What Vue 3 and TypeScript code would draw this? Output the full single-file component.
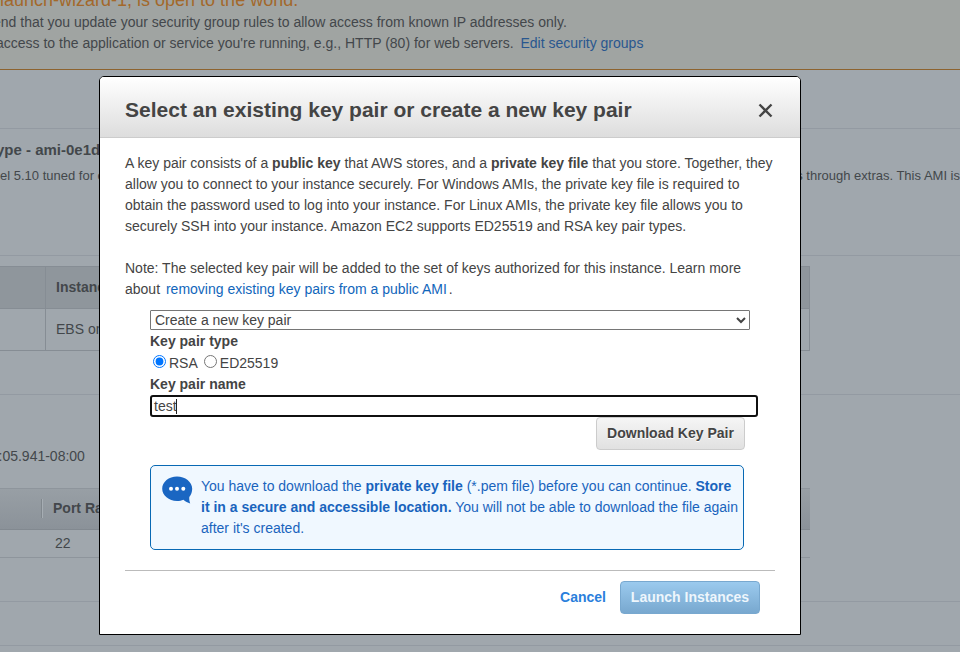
<script setup lang="ts">
import { ref } from 'vue'

const keyOption = ref('create')
const keyType = ref('rsa')
const keyName = ref('test')
const intro: { text: string; bold?: boolean }[][] = [
  [
    { text: 'A key pair consists of a ' },
    { text: 'public key', bold: true },
    { text: ' that AWS stores, and a ' },
    { text: 'private key file', bold: true },
    { text: ' that you store. Together, they' },
  ],
  [{ text: 'allow you to connect to your instance securely. For Windows AMIs, the private key file is required to' }],
  [{ text: 'obtain the password used to log into your instance. For Linux AMIs, the private key file allows you to' }],
  [{ text: 'securely SSH into your instance. Amazon EC2 supports ED25519 and RSA key pair types.' }],
]
</script>

<template>
  <div class="screen">
    <div class="page">
      <header class="alert">
        <h2>launch-wizard-1, is open to the world.</h2>
        <p class="recommend">end that you update your security group rules to allow access from known IP addresses only.</p>
        <p class="access">access to the application or service you're running, e.g., HTTP (80) for web servers. <a>Edit security groups</a></p>
      </header>
      <section class="band spacer"></section>
      <section class="band ami">
        <h3>ype - ami-0e1d</h3>
        <div class="ami-row">
          <span>el 5.10 tuned for optimal</span>
          <span>s through extras. This AMI is</span>
        </div>
      </section>
      <section class="band instance">
        <div class="grid">
          <div class="cell head"></div>
          <div class="cell head"><b>Instance</b></div>
          <div class="cell"></div>
          <div class="cell">EBS only</div>
        </div>
      </section>
      <section class="band security">
        <p class="created">:05.941-08:00</p>
        <div class="ports">
          <div class="ports-head"><b>Port Range</b></div>
          <div class="ports-row">22</div>
        </div>
      </section>
      <section class="band empty"></section>
    </div>

    <div class="modal" role="dialog">
      <header class="title">
        <h1>Select an existing key pair or create a new key pair</h1>
        <svg class="close" width="15" height="15" viewBox="0 0 15 15"><path d="M1.500 1.500 13.500 13.500M13.500 1.500 1.500 13.500" /></svg>
      </header>
      <div class="body">
        <div class="copy">
          <p v-for="(line, i) in intro" :key="i">
            <template v-for="(part, j) in line" :key="j"><b v-if="part.bold">{{ part.text }}</b><template v-else>{{ part.text }}</template></template>
          </p>
        </div>
        <div class="copy note">
          <p>Note: The selected key pair will be added to the set of keys authorized for this instance. Learn more</p>
          <p>about <a>removing existing key pairs from a public AMI</a><span class="stop">.</span></p>
        </div>
        <form class="form" @submit.prevent>
          <select v-model="keyOption">
            <option value="create">Create a new key pair</option>
          </select>
          <b class="label">Key pair type</b>
          <div class="radios">
            <label><input v-model="keyType" type="radio" value="rsa" /><span>RSA</span></label>
            <label><input v-model="keyType" type="radio" value="ed25519" /><span>ED25519</span></label>
          </div>
          <b class="label">Key pair name</b>
          <div class="field" role="textbox"><span>{{ keyName }}</span><i class="caret"></i></div>
          <button class="download" type="button">Download Key Pair</button>
        </form>
        <div class="info">
          <svg width="31" height="28" viewBox="0 0 31 28">
            <path class="bubble" d="M15 .5C6.800.5.2 6 .2 12.800C.2 19.500 6.800 25 15 25c2.500 0 4.500-.4 6.400-1.200 1.900 1.700 4.300 3.100 6.800 3.600-.8-1.900-1.100-4-.9-6.300 1.800-2.200 2.900-5.100 2.900-8.300C30.200 6 23.200.5 15 .5z" />
            <circle cx="9" cy="12.700" r="2" /><circle cx="15" cy="12.700" r="2" /><circle cx="21.300" cy="12.700" r="2" />
          </svg>
          <div>
            <p>You have to download the <b>private key file</b> (*.pem file) before you can continue. <b>Store</b></p>
            <p><b>it in a secure and accessible location.</b> You will not be able to download the file again</p>
            <p>after it's created.</p>
          </div>
        </div>
        <footer class="actions">
          <a class="cancel">Cancel</a>
          <button class="launch" type="button">Launch Instances</button>
        </footer>
      </div>
    </div>
  </div>
</template>

<style>
body {
  overflow: hidden;
}
</style>

<style scoped>
* {
  box-sizing: border-box;
}
.screen {
  position: relative;
  width: 960px;
  height: 652px;
  overflow: hidden;
  background: #a0a7ad;
  color: #444;
  font: 14px/21px "Liberation Sans", Arial, sans-serif;
}
p, h1, h2, h3 {
  margin: 0;
  white-space: nowrap;
}
.page {
  color: #43474b;
}
.alert {
  height: 70px;
  background: #a0a4a2;
  border-bottom: 1px solid #8d632f;
  overflow: hidden;
}
.alert h2 {
  margin-top: -11px;
  height: 23px;
  font-size: 18px;
  font-weight: 400;
  line-height: 23px;
  color: #a3682b;
}
.alert a {
  margin-left: 3px;
  color: #29578f;
}
.recommend {
  margin-left: -7px;
}
.access {
  margin-left: -4px;
}
.band {
  border-bottom: 1px solid #939aa2;
}
.spacer {
  height: 59px;
}
.ami {
  height: 127px;
  padding-top: 10px;
}
.ami h3 {
  margin-left: -4px;
  font-size: 15px;
  line-height: 21px;
}
.ami-row {
  display: flex;
  padding-top: 5px;
  font-size: 13px;
  white-space: nowrap;
}
.ami-row span:first-child {
  width: 797px;
}
.instance {
  height: 139px;
  padding-top: 10px;
}
.grid {
  display: grid;
  grid-template-columns: 46px 764px;
  grid-template-rows: 42px 42px;
  width: 810px;
  border-top: 1px solid #868d94;
}
.cell {
  padding: 10px;
  border-right: 1px solid #868d94;
  border-bottom: 1px solid #868d94;
}
.head {
  background: #8f969c;
}
.security {
  height: 207px;
  padding-top: 51px;
}
.created {
  margin-left: -1.500px;
}
.ports {
  width: 810px;
  margin-top: 21px;
}
.ports-head {
  display: flex;
  align-items: center;
  height: 42px;
  padding: 0 0 1px 41px;
  background: linear-gradient(#989fa5, #8b9299);
  border-top: 1px solid #8e959c;
  border-bottom: 1px solid #828990;
}
.ports-head b {
  padding-left: 11px;
  border-left: 1px solid #80878d;
  box-shadow: inset 1px 0 #a6adb3;
  line-height: 19px;
}
.ports-row {
  height: 28px;
  padding: 3px 0 0 55px;
  border-bottom: 1px solid #8e959c;
}
.empty {
  height: 44px;
}
.modal {
  position: absolute;
  top: 76px;
  left: 99px;
  width: 702px;
  height: 559px;
  overflow: hidden;
  background: #fff;
  border: 1px solid #000;
  border-radius: 5px 5px 0 0;
}
.title {
  display: flex;
  align-items: center;
  justify-content: space-between;
  height: 61px;
  padding: 6px 27px 0 25px;
  background: linear-gradient(#fff, #ddd);
  border-bottom: 1px solid #ccc;
}
.title h1 {
  font-size: 21px;
  line-height: 26px;
}
.close {
  fill: none;
  stroke: #444;
  stroke-width: 2.400;
}
.body {
  padding: 15px 25px 0;
}
.note {
  padding-top: 21px;
}
.copy a {
  margin-left: 2px;
  color: #1166bb;
}
.stop {
  margin-left: 2px;
}
.form {
  display: flex;
  flex-direction: column;
  padding: 10px 0 0 25px;
}
select {
  width: 600px;
  height: 20px;
  margin-bottom: 1px;
  padding: 0;
  color: #444;
  background: #fff;
  border: 1px solid #767676;
  border-radius: 1px;
  font: 14px "Liberation Sans", Arial, sans-serif;
}
.label {
  height: 21px;
  line-height: 21px;
}
.radios {
  display: flex;
  gap: 6px;
  height: 22px;
  padding-left: 3px;
}
.radios label {
  display: flex;
}
.radios input {
  width: 13px;
  height: 13px;
  margin: 3px 3px 0 0;
}
.radios span {
  line-height: 22px;
}
.field {
  display: flex;
  align-items: center;
  width: 608px;
  height: 22px;
  padding-left: 2px;
  border: 2px solid #101010;
  border-radius: 3px;
}
.caret {
  width: 1px;
  height: 15px;
  margin-left: -1px;
  background: #222;
}
.download,
.launch {
  height: 33px;
  padding: 0 0 2px;
  border-radius: 4px;
  font: bold 14px "Liberation Sans", Arial, sans-serif;
  white-space: nowrap;
}
.download {
  width: 149px;
  margin-left: 446px;
  color: #444;
  background: linear-gradient(#f5f5f5, #e1e1e1);
  border: 1px solid #ccc;
  text-shadow: 0 1px #fff;
}
.info {
  display: flex;
  width: 594px;
  height: 85px;
  margin: 15px 0 0 25px;
  padding: 10px 0 0 11px;
  color: #1964bd;
  background: #f0f8ff;
  border: 1px solid #0869b4;
  border-radius: 5px;
}
.info svg {
  flex: none;
  margin-right: 8px;
  fill: #fff;
}
.bubble {
  fill: #1a66c2;
}
.actions {
  display: flex;
  align-items: center;
  justify-content: flex-end;
  gap: 14px;
  margin-top: 20px;
  padding: 10px 15px 0 0;
  border-top: 1px solid #bbb;
}
.cancel {
  color: #2a7fdc;
  font-weight: 700;
}
.launch {
  width: 140px;
  color: #eef6fc;
  background: linear-gradient(#9bcaee, #78a8cf);
  border: 1px solid #78a8cf;
}
</style>
